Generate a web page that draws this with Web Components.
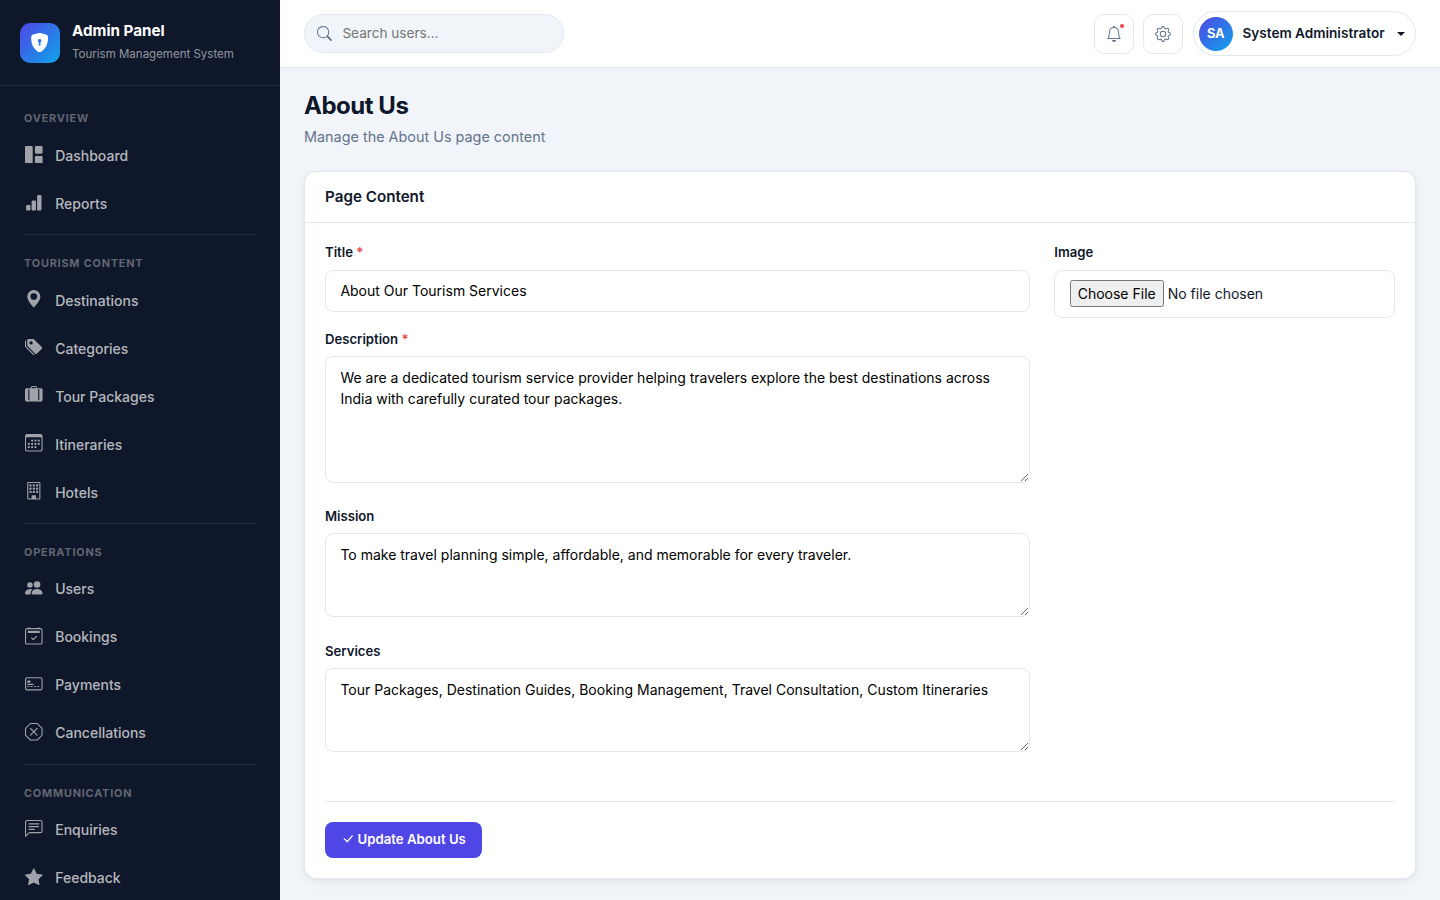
<!DOCTYPE html>
<html lang="en">
<head>
<meta charset="UTF-8">
<meta name="viewport" content="width=device-width, initial-scale=1.0">
<title>About Us | Admin Panel</title>
<style>
  :root {
    --primary: #4f46e5;
    --accent: #0ea5e9;
    --dark: #0f172a;
    --muted: #64748b;
    --border: #e2e8f0;
    --body-bg: #f1f5f9;
  }

  body {
    margin: 0;
    height: 100vh;
    overflow: hidden;
    font-family: Inter, "Liberation Sans", sans-serif;
    font-size: 16px;
    line-height: 1.5;
    color: var(--dark);
    background: var(--body-bg);
  }
</style>
</head>
<body>

<admin-layout>
  <admin-sidebar slot="sidebar">
    <side-brand slot="brand" name="Admin Panel" tagline="Tourism Management System"></side-brand>
    <side-section label="Overview">
      <side-link icon="grid">Dashboard</side-link>
      <side-link icon="bars">Reports</side-link>
    </side-section>
    <side-section label="Tourism Content">
      <side-link icon="pin">Destinations</side-link>
      <side-link icon="tags">Categories</side-link>
      <side-link icon="suitcase">Tour Packages</side-link>
      <side-link icon="calendar">Itineraries</side-link>
      <side-link icon="building">Hotels</side-link>
    </side-section>
    <side-section label="Operations">
      <side-link icon="people">Users</side-link>
      <side-link icon="calendar-check">Bookings</side-link>
      <side-link icon="card">Payments</side-link>
      <side-link icon="octagon">Cancellations</side-link>
    </side-section>
    <side-section label="Communication">
      <side-link icon="chat">Enquiries</side-link>
      <side-link icon="star">Feedback</side-link>
    </side-section>
  </admin-sidebar>

  <top-bar slot="topbar">
    <search-box placeholder="Search users..."></search-box>
    <icon-button slot="actions" icon="bell" dot></icon-button>
    <icon-button slot="actions" icon="gear"></icon-button>
    <user-chip slot="actions" initials="SA">System Administrator</user-chip>
  </top-bar>

  <page-heading>
    About Us
    <span slot="subtitle">Manage the About Us page content</span>
  </page-heading>

  <content-card>
    <span slot="title">Page Content</span>
    <form-field label="Title" required value="About Our Tourism Services"></form-field>
    <form-field label="Description" required rows="5" value="We are a dedicated tourism service provider helping travelers explore the best destinations across India with carefully curated tour packages."></form-field>
    <form-field label="Mission" rows="3" value="To make travel planning simple, affordable, and memorable for every traveler."></form-field>
    <form-field label="Services" rows="3" value="Tour Packages, Destination Guides, Booking Management, Travel Consultation, Custom Itineraries"></form-field>
    <form-field slot="aside" label="Image" type="file"></form-field>
    <action-button slot="footer" icon="check">Update About Us</action-button>
  </content-card>
</admin-layout>

<script>
// 16x16 icon paths
const dot = (x, y) => `M${x} ${y}a1 1 0 1 0 0-2 1 1 0 0 0 0 2`;
const pane = (x, y) => `M${x} ${y}a.5.5 0 0 1 .5-.5h1a.5.5 0 0 1 .5.5v1a.5.5 0 0 1-.5.5h-1a.5.5 0 0 1-.5-.5z`;
const dash = (x) => `M${x} 10.5a.5.5 0 0 1 .5-.5h1a.5.5 0 0 1 0 1h-1a.5.5 0 0 1-.5-.5`;

const ICONS = {
  shield: ['M8 0c-.69 0-1.843.265-2.928.56-1.11.3-2.229.655-2.887.87a1.54 1.54 0 0 0-1.044 1.262c-.596 4.477.787 7.795 2.465 9.99a11.8 11.8 0 0 0 2.517 2.453c.386.273.744.482 1.048.625.28.132.581.24.829.24s.548-.108.829-.24a7 7 0 0 0 1.048-.625 11.8 11.8 0 0 0 2.517-2.453c1.678-2.195 3.061-5.513 2.465-9.99a1.54 1.54 0 0 0-1.044-1.263 63 63 0 0 0-2.887-.87C9.843.266 8.69 0 8 0m0 5a1.5 1.5 0 0 1 .5 2.915l.385 1.99a.5.5 0 0 1-.491.595h-.788a.5.5 0 0 1-.49-.595l.384-1.99A1.5 1.5 0 0 1 8 5'],
  grid: ['M0 1a1 1 0 0 1 1-1h5a1 1 0 0 1 1 1v14a1 1 0 0 1-1 1H1a1 1 0 0 1-1-1zm9 0a1 1 0 0 1 1-1h5a1 1 0 0 1 1 1v5a1 1 0 0 1-1 1h-5a1 1 0 0 1-1-1zm0 9a1 1 0 0 1 1-1h5a1 1 0 0 1 1 1v5a1 1 0 0 1-1 1h-5a1 1 0 0 1-1-1z'],
  bars: ['M1 11a1 1 0 0 1 1-1h2a1 1 0 0 1 1 1v3a1 1 0 0 1-1 1H2a1 1 0 0 1-1-1zm5-4a1 1 0 0 1 1-1h2a1 1 0 0 1 1 1v7a1 1 0 0 1-1 1H7a1 1 0 0 1-1-1zm5-5a1 1 0 0 1 1-1h2a1 1 0 0 1 1 1v12a1 1 0 0 1-1 1h-2a1 1 0 0 1-1-1z'],
  pin: ['M8 16s6-5.686 6-10A6 6 0 0 0 2 6c0 4.314 6 10 6 10m0-7a3 3 0 1 1 0-6 3 3 0 0 1 0 6'],
  tags: [
    'M2 2a1 1 0 0 1 1-1h4.586a1 1 0 0 1 .707.293l7 7a1 1 0 0 1 0 1.414l-4.586 4.586a1 1 0 0 1-1.414 0l-7-7A1 1 0 0 1 2 6.586zm3.5 4a1.5 1.5 0 1 0 0-3 1.5 1.5 0 0 0 0 3',
    'M1.293 7.793A1 1 0 0 1 1 7.086V2a1 1 0 0 0-1 1v4.586a1 1 0 0 0 .293.707l7 7a1 1 0 0 0 1.414 0l.043-.043z'
  ],
  suitcase: ['M7 0a2 2 0 0 0-2 2H1.5A1.5 1.5 0 0 0 0 3.5v9A1.5 1.5 0 0 0 1.5 14H2a.5.5 0 0 0 1 0h10a.5.5 0 0 0 1 0h.5a1.5 1.5 0 0 0 1.5-1.5v-9A1.5 1.5 0 0 0 14.5 2H11a2 2 0 0 0-2-2zM6 2a1 1 0 0 1 1-1h2a1 1 0 0 1 1 1zM3 13V3h1v10zm9 0V3h1v10z'],
  calendar: [
    'M14 0H2a2 2 0 0 0-2 2v12a2 2 0 0 0 2 2h12a2 2 0 0 0 2-2V2a2 2 0 0 0-2-2M1 3.857C1 3.384 1.448 3 2 3h12c.552 0 1 .384 1 .857v10.286c0 .473-.448.857-1 .857H2c-.552 0-1-.384-1-.857z',
    dot(6.5, 7) + dot(9.5, 7) + dot(12.5, 7) + dot(3.5, 10) + dot(6.5, 10) + dot(9.5, 10) + dot(12.5, 10) + dot(3.5, 13) + dot(6.5, 13) + dot(9.5, 13)
  ],
  building: [
    [2.5, 5.5, 8.5].map(y => pane(4, y) + pane(7, y) + pane(10, y)).join(''),
    'M2 1a1 1 0 0 1 1-1h10a1 1 0 0 1 1 1v14a1 1 0 0 1-1 1H3a1 1 0 0 1-1-1zm11 0H3v14h3v-2.5a.5.5 0 0 1 .5-.5h3a.5.5 0 0 1 .5.5V15h3z'
  ],
  people: ['M7 14s-1 0-1-1 1-4 5-4 5 3 5 4-1 1-1 1zm4-6a3 3 0 1 0 0-6 3 3 0 0 0 0 6m-5.784 6A2.24 2.24 0 0 1 5 13c0-1.355.68-2.75 1.936-3.72A6.3 6.3 0 0 0 5 9c-4 0-5 3-5 4s1 1 1 1zM4.5 8a2.5 2.5 0 1 0 0-5 2.5 2.5 0 0 0 0 5'],
  'calendar-check': [
    'M10.854 8.146a.5.5 0 0 1 0 .708l-3 3a.5.5 0 0 1-.708 0l-1.5-1.5a.5.5 0 0 1 .708-.708L7.5 10.793l2.646-2.647a.5.5 0 0 1 .708 0',
    'M3.5 0a.5.5 0 0 1 .5.5V1h8V.5a.5.5 0 0 1 1 0V1h1a2 2 0 0 1 2 2v11a2 2 0 0 1-2 2H2a2 2 0 0 1-2-2V3a2 2 0 0 1 2-2h1V.5a.5.5 0 0 1 .5-.5M2 2a1 1 0 0 0-1 1v11a1 1 0 0 0 1 1h12a1 1 0 0 0 1-1V3a1 1 0 0 0-1-1z',
    'M2.5 4a.5.5 0 0 1 .5-.5h10a.5.5 0 0 1 .5.5v1a.5.5 0 0 1-.5.5H3a.5.5 0 0 1-.5-.5z'
  ],
  card: [
    'M14 3a1 1 0 0 1 1 1v8a1 1 0 0 1-1 1H2a1 1 0 0 1-1-1V4a1 1 0 0 1 1-1zM2 2a2 2 0 0 0-2 2v8a2 2 0 0 0 2 2h12a2 2 0 0 0 2-2V4a2 2 0 0 0-2-2z',
    'M2 5.5a.5.5 0 0 1 .5-.5h2a.5.5 0 0 1 .5.5v1a.5.5 0 0 1-.5.5h-2a.5.5 0 0 1-.5-.5zm0 3a.5.5 0 0 1 .5-.5h5a.5.5 0 0 1 0 1h-5a.5.5 0 0 1-.5-.5',
    dash(2) + dash(5) + dash(8) + dash(11)
  ],
  octagon: [
    'M4.54.146A.5.5 0 0 1 4.893 0h6.214a.5.5 0 0 1 .353.146l4.394 4.394a.5.5 0 0 1 .146.353v6.214a.5.5 0 0 1-.146.353l-4.394 4.394a.5.5 0 0 1-.353.146H4.893a.5.5 0 0 1-.353-.146L.146 11.46A.5.5 0 0 1 0 11.107V4.893a.5.5 0 0 1 .146-.353zM5.1 1 1 5.1v5.8L5.1 15h5.8l4.1-4.1V5.1L10.9 1z',
    'M4.646 4.646a.5.5 0 0 1 .708 0L8 7.293l2.646-2.647a.5.5 0 0 1 .708.708L8.707 8l2.647 2.646a.5.5 0 0 1-.708.708L8 8.707l-2.646 2.647a.5.5 0 0 1-.708-.708L7.293 8 4.646 5.354a.5.5 0 0 1 0-.708'
  ],
  chat: [
    'M14 1a1 1 0 0 1 1 1v8a1 1 0 0 1-1 1H4.414A2 2 0 0 0 3 11.586l-2 2V2a1 1 0 0 1 1-1zM2 0a2 2 0 0 0-2 2v12.793a.5.5 0 0 0 .854.353l2.853-2.853A1 1 0 0 1 4.414 12H14a2 2 0 0 0 2-2V2a2 2 0 0 0-2-2z',
    'M3 3.5a.5.5 0 0 1 .5-.5h9a.5.5 0 0 1 0 1h-9a.5.5 0 0 1-.5-.5M3 6a.5.5 0 0 1 .5-.5h9a.5.5 0 0 1 0 1h-9A.5.5 0 0 1 3 6m0 2.5a.5.5 0 0 1 .5-.5h5a.5.5 0 0 1 0 1h-5a.5.5 0 0 1-.5-.5'
  ],
  star: ['M3.612 15.443c-.386.198-.824-.149-.746-.592l.83-4.73L.173 6.765c-.329-.314-.158-.888.283-.95l4.898-.696L7.538.792c.197-.39.73-.39.927 0l2.184 4.327 4.898.696c.441.062.612.636.282.95l-3.522 3.356.83 4.73c.078.443-.36.79-.746.592L8 13.187l-4.389 2.256z'],
  bell: ['M8 16a2 2 0 0 0 2-2H6a2 2 0 0 0 2 2M8 1.918l-.797.161A4 4 0 0 0 4 6c0 .628-.134 2.197-.459 3.742-.16.767-.376 1.566-.663 2.258h10.244c-.287-.692-.502-1.49-.663-2.258C12.134 8.197 12 6.628 12 6a4 4 0 0 0-3.203-3.92zM14.22 12c.223.447.481.801.78 1H1c.299-.199.557-.553.78-1C2.68 10.2 3 6.88 3 6c0-2.42 1.72-4.44 4.005-4.901a1 1 0 1 1 1.99 0A5 5 0 0 1 13 6c0 .88.32 4.2 1.22 6'],
  gear: [
    'M8 4.754a3.246 3.246 0 1 0 0 6.492 3.246 3.246 0 0 0 0-6.492M5.754 8a2.246 2.246 0 1 1 4.492 0 2.246 2.246 0 0 1-4.492 0',
    'M9.796 1.343c-.527-1.79-3.065-1.79-3.592 0l-.094.319a.873.873 0 0 1-1.255.52l-.292-.16c-1.64-.892-3.433.902-2.54 2.541l.159.292a.873.873 0 0 1-.52 1.255l-.319.094c-1.79.527-1.79 3.065 0 3.592l.319.094a.873.873 0 0 1 .52 1.255l-.16.292c-.892 1.64.901 3.434 2.541 2.54l.292-.159a.873.873 0 0 1 1.255.52l.094.319c.527 1.79 3.065 1.79 3.592 0l.094-.319a.873.873 0 0 1 1.255-.52l.292.16c1.64.893 3.434-.902 2.54-2.541l-.159-.292a.873.873 0 0 1 .52-1.255l.319-.094c1.79-.527 1.79-3.065 0-3.592l-.319-.094a.873.873 0 0 1-.52-1.255l.16-.292c.893-1.64-.902-3.433-2.541-2.54l-.292.159a.873.873 0 0 1-1.255-.52zm-2.633.283c.246-.835 1.428-.835 1.674 0l.094.319a1.873 1.873 0 0 0 2.693 1.115l.291-.16c.764-.415 1.6.42 1.184 1.185l-.159.292a1.873 1.873 0 0 0 1.116 2.692l.318.094c.835.246.835 1.428 0 1.674l-.319.094a1.873 1.873 0 0 0-1.115 2.693l.16.291c.415.764-.42 1.6-1.185 1.184l-.291-.159a1.873 1.873 0 0 0-2.693 1.116l-.094.318c-.246.835-1.428.835-1.674 0l-.094-.319a1.873 1.873 0 0 0-2.692-1.115l-.292.16c-.764.415-1.6-.42-1.184-1.185l.159-.291A1.873 1.873 0 0 0 1.945 8.93l-.319-.094c-.835-.246-.835-1.428 0-1.674l.319-.094A1.873 1.873 0 0 0 3.06 4.377l-.16-.292c-.415-.764.42-1.6 1.185-1.184l.292.159a1.873 1.873 0 0 0 2.692-1.115z'
  ],
  search: ['M11.742 10.344a6.5 6.5 0 1 0-1.397 1.398h-.001q.044.06.098.115l3.85 3.85a1 1 0 0 0 1.415-1.414l-3.85-3.85a1 1 0 0 0-.115-.1zM12 6.5a5.5 5.5 0 1 1-11 0 5.5 5.5 0 0 1 11 0'],
  check: ['M12.736 3.97a.733.733 0 0 1 1.047 0c.286.289.29.756.01 1.05L7.88 12.01a.733.733 0 0 1-1.065.02L3.217 8.384a.757.757 0 0 1 0-1.06.733.733 0 0 1 1.047 0l3.052 3.093 5.4-6.425z']
};

class UiIcon extends HTMLElement {
  constructor() {
    super();
    this.attachShadow({ mode: 'open' });
    const paths = ICONS[this.getAttribute('name')] || [];

    this.shadowRoot.innerHTML = `
      <style>
        :host {
          display: block;
          flex: none;
          width: 1em;
          height: 1em;
        }

        svg {
          display: block;
          width: 100%;
          height: 100%;
        }
      </style>
      <svg viewBox="0 0 16 16" fill="currentColor" aria-hidden="true">
        ${paths.map(d => `<path d="${d}"/>`).join('')}
      </svg>
    `;
  }
}

class AdminLayout extends HTMLElement {
  constructor() {
    super();
    this.attachShadow({ mode: 'open' });
    this.shadowRoot.innerHTML = `
      <style>
        :host {
          display: grid;
          grid-template-columns: 280px minmax(0, 1fr);
          height: 100vh;
        }

        .main {
          display: flex;
          flex-direction: column;
          min-height: 0;
        }

        main {
          padding: 24px;
        }
      </style>
      <slot name="sidebar"></slot>
      <div class="main">
        <slot name="topbar"></slot>
        <main><slot></slot></main>
      </div>
    `;
  }
}

class AdminSidebar extends HTMLElement {
  constructor() {
    super();
    this.attachShadow({ mode: 'open' });
    this.shadowRoot.innerHTML = `
      <style>
        :host {
          display: block;
          height: 100vh;
          overflow: hidden;
          background: var(--dark);
        }

        nav {
          padding-top: 16.4px;
        }
      </style>
      <slot name="brand"></slot>
      <nav><slot></slot></nav>
    `;
  }
}

class SideBrand extends HTMLElement {
  constructor() {
    super();
    this.attachShadow({ mode: 'open' });
    this.shadowRoot.innerHTML = `
      <style>
        :host {
          display: flex;
          align-items: center;
          gap: 12px;
          box-sizing: border-box;
          height: 86px;
          padding: 0 20px;
          border-bottom: 1px solid rgba(255, 255, 255, 0.08);
        }

        .logo {
          display: grid;
          place-items: center;
          width: 40px;
          height: 40px;
          border-radius: 10px;
          color: #fff;
          font-size: 19.2px;
          background: linear-gradient(135deg, var(--primary), var(--accent));
        }

        .text {
          padding-bottom: 2px;
        }

        .name {
          font-size: 15.2px;
          font-weight: 700;
          line-height: 22.8px;
          color: #fff;
        }

        .tagline {
          font-size: 11.52px;
          line-height: 18px;
          margin-top: 3px;
          color: rgba(255, 255, 255, 0.55);
        }
      </style>
      <div class="logo"><ui-icon name="shield"></ui-icon></div>
      <div class="text">
        <div class="name">${this.getAttribute('name')}</div>
        <div class="tagline">${this.getAttribute('tagline')}</div>
      </div>
    `;
  }
}

class SideSection extends HTMLElement {
  constructor() {
    super();
    this.attachShadow({ mode: 'open' });
    this.shadowRoot.innerHTML = `
      <style>
        :host {
          display: block;
          margin: 0 12px;
        }

        :host(:not(:first-of-type)) {
          margin-top: 6.9px;
        }

        :host(:not(:first-of-type))::before {
          content: "";
          display: block;
          height: 1px;
          margin: 0 12px 12px;
          background: rgba(255, 255, 255, 0.08);
        }

        .label {
          padding: 8px 12px 4.9px;
          font-size: 10.88px;
          font-weight: 700;
          line-height: 16px;
          letter-spacing: 0.8px;
          text-transform: uppercase;
          color: rgba(255, 255, 255, 0.35);
        }
      </style>
      <div class="label">${this.getAttribute('label')}</div>
      <slot></slot>
    `;
  }
}

class SideLink extends HTMLElement {
  constructor() {
    super();
    this.attachShadow({ mode: 'open' });
    this.shadowRoot.innerHTML = `
      <style>
        :host {
          display: block;
          height: 48px;
        }

        a {
          display: flex;
          align-items: center;
          gap: 11.2px;
          height: 48px;
          padding: 0 12px;
          font-size: 14px;
          font-weight: 500;
          color: rgba(255, 255, 255, 0.7);
          cursor: pointer;
        }

        .icon {
          display: flex;
          justify-content: center;
          width: 20px;
          padding-bottom: 1.6px;
          font-size: 17.6px;
          color: rgba(255, 255, 255, 0.6);
        }
      </style>
      <a><span class="icon"><ui-icon name="${this.getAttribute('icon')}"></ui-icon></span><slot></slot></a>
    `;
  }
}

class TopBar extends HTMLElement {
  constructor() {
    super();
    this.attachShadow({ mode: 'open' });
    this.shadowRoot.innerHTML = `
      <style>
        :host {
          display: flex;
          flex: none;
          align-items: center;
          justify-content: space-between;
          box-sizing: border-box;
          height: 68px;
          padding: 0 24px;
          background: #fff;
          border-bottom: 1px solid var(--border);
        }

        .actions {
          display: flex;
          align-items: center;
          gap: 9.6px;
        }
      </style>
      <slot></slot>
      <div class="actions"><slot name="actions"></slot></div>
    `;
  }
}

class SearchBox extends HTMLElement {
  constructor() {
    super();
    this.attachShadow({ mode: 'open' });
    this.shadowRoot.innerHTML = `
      <style>
        :host {
          display: flex;
          align-items: center;
          gap: 10.4px;
          box-sizing: border-box;
          width: 260px;
          height: 39px;
          padding: 0 12px 1px;
          border: 1px solid var(--border);
          border-radius: 50px;
          background: var(--body-bg);
        }

        ui-icon {
          font-size: 15px;
          color: var(--muted);
        }

        input {
          flex: 1;
          min-width: 0;
          padding: 0;
          border: 0;
          outline: 0;
          background: none;
          font: 400 13.6px/20px Inter, sans-serif;
        }
      </style>
      <ui-icon name="search"></ui-icon>
      <input type="text" placeholder="${this.getAttribute('placeholder')}">
    `;
  }
}

class IconButton extends HTMLElement {
  constructor() {
    super();
    this.attachShadow({ mode: 'open' });
    this.shadowRoot.innerHTML = `
      <style>
        :host {
          display: grid;
          place-items: center;
          position: relative;
          box-sizing: border-box;
          width: 40px;
          height: 40px;
          border: 1px solid var(--border);
          border-radius: 10px;
          background: #fff;
          font-size: 16px;
          color: var(--muted);
          cursor: pointer;
        }

        .dot {
          position: absolute;
          top: 9px;
          right: 9px;
          width: 4px;
          height: 4px;
          border-radius: 50%;
          background: #ef4444;
        }
      </style>
      <ui-icon name="${this.getAttribute('icon')}"></ui-icon>
      ${this.hasAttribute('dot') ? '<span class="dot"></span>' : ''}
    `;
  }
}

class UserChip extends HTMLElement {
  constructor() {
    super();
    this.attachShadow({ mode: 'open' });
    this.shadowRoot.innerHTML = `
      <style>
        :host {
          display: flex;
          align-items: center;
          gap: 9.6px;
          box-sizing: border-box;
          height: 45px;
          padding: 0 10px 0 5px;
          border: 1px solid var(--border);
          border-radius: 50px;
          background: #fff;
          font-size: 13.6px;
          font-weight: 600;
          cursor: pointer;
        }

        .avatar {
          display: grid;
          place-items: center;
          width: 34px;
          height: 34px;
          border-radius: 50%;
          font-size: 12.8px;
          font-weight: 700;
          color: #fff;
          background: linear-gradient(135deg, var(--primary), var(--accent));
        }

        .caret {
          margin-left: 2.8px;
          border: 4.2px solid transparent;
          border-top-color: currentColor;
          border-bottom: 0;
        }
      </style>
      <span class="avatar">${this.getAttribute('initials')}</span>
      <slot></slot>
      <span class="caret"></span>
    `;
  }
}

class PageHeading extends HTMLElement {
  constructor() {
    super();
    this.attachShadow({ mode: 'open' });
    this.shadowRoot.innerHTML = `
      <style>
        :host {
          display: block;
          margin-bottom: 23.6px;
        }

        h1 {
          margin: 0 0 5.4px;
          font-size: 24px;
          font-weight: 700;
          line-height: 28.8px;
          letter-spacing: -0.48px;
        }

        p {
          margin: 0;
          font-size: 14.4px;
          line-height: 21.6px;
          color: var(--muted);
        }
      </style>
      <h1><slot></slot></h1>
      <p><slot name="subtitle"></slot></p>
    `;
  }
}

class ContentCard extends HTMLElement {
  constructor() {
    super();
    this.attachShadow({ mode: 'open' });
    this.shadowRoot.innerHTML = `
      <style>
        :host {
          display: block;
          border: 1px solid var(--border);
          border-radius: 12px;
          background: #fff;
          box-shadow: 0 1px 3px rgba(15, 23, 42, 0.06), 0 4px 12px rgba(15, 23, 42, 0.04);
        }

        header {
          box-sizing: border-box;
          height: 51px;
          padding: 0 20px;
          border-bottom: 1px solid var(--border);
          font-size: 15.2px;
          font-weight: 600;
          line-height: 50px;
        }

        .body {
          padding: 19.9px 20px 20px;
        }

        .row {
          display: grid;
          grid-template-columns: 705.3px minmax(0, 1fr);
          gap: 24px;
        }

        footer {
          display: flex;
          margin-top: 24.9px;
          padding-top: 20px;
          border-top: 1px solid var(--border);
        }
      </style>
      <header><slot name="title"></slot></header>
      <div class="body">
        <div class="row">
          <div><slot></slot></div>
          <div><slot name="aside"></slot></div>
        </div>
        <footer><slot name="footer"></slot></footer>
      </div>
    `;
  }
}

class FormField extends HTMLElement {
  constructor() {
    super();
    this.attachShadow({ mode: 'open' });
    const value = this.getAttribute('value') || '';
    const rows = this.getAttribute('rows');
    const type = this.getAttribute('type') || 'text';
    const control = rows
      ? `<textarea rows="${rows}" spellcheck="false">${value}</textarea>`
      : `<input type="${type}" value="${type === 'file' ? '' : value}">`;

    this.shadowRoot.innerHTML = `
      <style>
        :host {
          display: flow-root;
          padding-bottom: 18.3px;
        }

        label {
          display: block;
          margin-bottom: 6.6px;
          font-size: 13.12px;
          font-weight: 600;
          line-height: 19.7px;
        }

        .required {
          color: #ef4444;
        }

        input,
        textarea {
          display: block;
          box-sizing: border-box;
          width: 100%;
          margin: 0;
          padding: 9.6px 14.4px;
          border: 1px solid var(--border);
          border-radius: 8px;
          outline: 0;
          background: #fff;
          font-family: Inter, sans-serif;
          font-size: 14px;
          line-height: 21px;
          color: #000;
        }

        input[type="text"] {
          height: 42.2px;
        }

        input[type="file"] {
          height: 48.2px;
          color: var(--dark);
        }

        input::file-selector-button {
          box-sizing: border-box;
          height: 27px;
          font: inherit;
        }

        /* room below for the resize handle */
        textarea {
          margin-bottom: 6px;
        }
      </style>
      <label>${this.getAttribute('label')}${this.hasAttribute('required') ? ' <span class="required">*</span>' : ''}</label>
      ${control}
    `;
  }
}

class ActionButton extends HTMLElement {
  constructor() {
    super();
    this.attachShadow({ mode: 'open' });
    this.shadowRoot.innerHTML = `
      <style>
        button {
          display: flex;
          align-items: center;
          gap: 3px;
          height: 36px;
          margin: 0;
          padding: 0 16px 2px;
          border: 0;
          border-radius: 8px;
          background: var(--primary);
          color: #fff;
          font: 600 13.2px Inter, sans-serif;
          cursor: pointer;
        }

        ui-icon {
          font-size: 13.6px;
        }
      </style>
      <button type="button"><ui-icon name="${this.getAttribute('icon')}"></ui-icon><slot></slot></button>
    `;
  }
}

customElements.define('ui-icon', UiIcon);
customElements.define('admin-layout', AdminLayout);
customElements.define('admin-sidebar', AdminSidebar);
customElements.define('side-brand', SideBrand);
customElements.define('side-section', SideSection);
customElements.define('side-link', SideLink);
customElements.define('top-bar', TopBar);
customElements.define('search-box', SearchBox);
customElements.define('icon-button', IconButton);
customElements.define('user-chip', UserChip);
customElements.define('page-heading', PageHeading);
customElements.define('content-card', ContentCard);
customElements.define('form-field', FormField);
customElements.define('action-button', ActionButton);
</script>
</body>
</html>
